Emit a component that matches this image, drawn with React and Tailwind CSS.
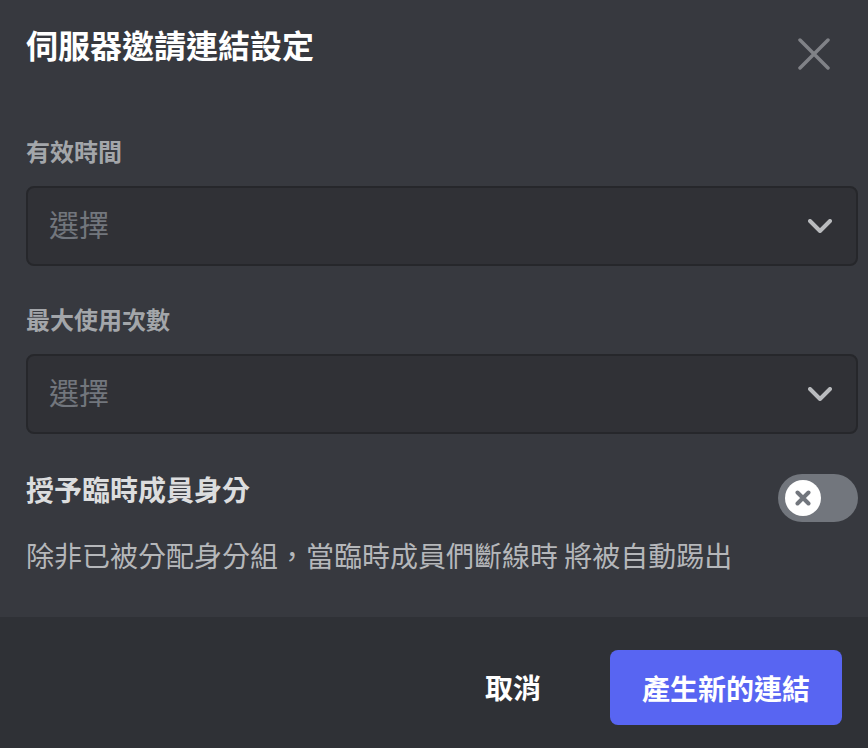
import React, { useState } from "react";

const fuente = { fontFamily: '"Noto Sans CJK TC", "Noto Sans", sans-serif' };

const Chevron = () => (
    <svg width="24" height="14" viewBox="0 0 24 14" fill="none">
        <path d="M2 2l10 10L22 2" stroke="#b9bbbe" strokeWidth="4" strokeLinecap="round" strokeLinejoin="round" />
    </svg>
);

const Selector = ({ label }) => (
    <div className="flex flex-col">
        <div className="text-[24px] leading-[32px] font-bold text-[#a3a6aa] mb-[19px]">{label}</div>
        <div className="h-[80px] rounded-[8px] bg-[#303136] border-2 border-[#26272b] flex items-center justify-between pl-[21px] pr-[24px]">
            <span className="text-[30px] leading-[40px] text-[#72767d] -mt-[6px]">選擇</span>
            <Chevron />
        </div>
    </div>
);

export default function App() {
    const [temporal, setTemporal] = useState(false);

    return (
        <div className="w-[868px] h-[748px] bg-[#37393f] flex flex-col overflow-hidden" style={fuente}>
            <div className="flex-1 pl-[26px] pr-[10px]">
                {/* encabezado */}
                <div className="flex justify-between items-start pt-[24px]">
                    <h1 className="text-[32px] leading-[40px] font-bold text-white">伺服器邀請連結設定</h1>
                    <button type="button" className="mt-[14px] mr-[28px] w-[32px] h-[32px] flex items-center justify-center">
                        <svg width="32" height="32" viewBox="0 0 32 32" fill="none">
                            <path d="M2 2l28 28M30 2L2 30" stroke="#808287" strokeWidth="3.5" strokeLinecap="round" />
                        </svg>
                    </button>
                </div>

                <div className="mt-[65px] flex flex-col gap-[37px]">
                    <Selector label="有效時間" />
                    <Selector label="最大使用次數" />
                </div>

                {/* miembro temporal */}
                <div className="mt-[40px] flex items-center justify-between">
                    <span className="text-[28px] leading-[40px] font-bold text-[#dcddde] -mt-[18px]">授予臨時成員身分</span>
                    <button
                        type="button"
                        onClick={() => setTemporal(!temporal)}
                        className="w-[80px] h-[48px] rounded-full bg-[#72767d] flex items-center pl-[7px]"
                    >
                        <span className="w-[36px] h-[36px] rounded-full bg-white flex items-center justify-center">
                            <svg width="16" height="16" viewBox="0 0 16 16" fill="none">
                                <path d="M2.5 2.5l11 11M13.5 2.5l-11 11" stroke="#72767d" strokeWidth="4" strokeLinecap="round" />
                            </svg>
                        </span>
                    </button>
                </div>
                <p className="mt-[13px] text-[28px] leading-[40px] text-[#b5b7ba]">除非已被分配身分組，當臨時成員們斷線時 將被自動踢出</p>
            </div>

            {/* pie */}
            <div className="h-[131px] shrink-0 bg-[#2f3136] flex items-center justify-end px-[26px]">
                <button type="button" className="text-[28px] font-bold text-white px-[32px] mr-[37px] mt-[8px]">取消</button>
                <button type="button" className="w-[232px] h-[75px] rounded-[8px] bg-[#5865f2] text-[28px] font-bold text-white mt-[10px]">產生新的連結</button>
            </div>
        </div>
    );
}
